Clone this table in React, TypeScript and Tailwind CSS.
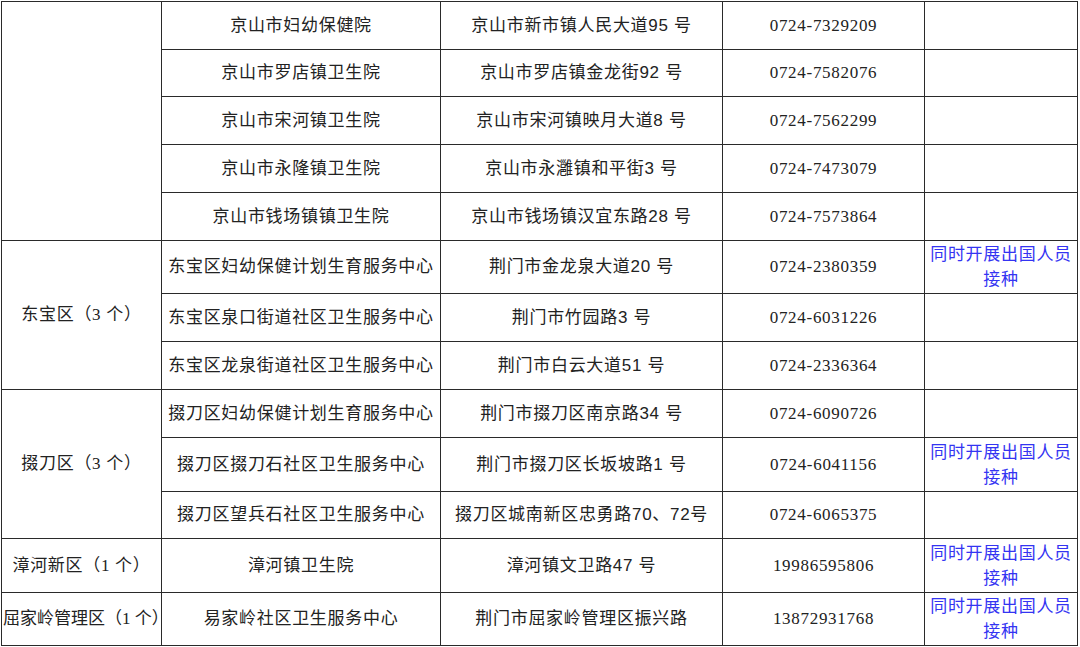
import React from "react";

const CJK = "font-['Liberation_Sans','Noto_Sans_CJK_SC',sans-serif]";
const SERIF = "font-['Liberation_Serif','Noto_Sans_CJK_SC',serif]";

type Row = {
  name: string;
  addr: string;
  phone: string;
  note?: boolean;
  h: string;
};

const rows: Row[] = [
  { name: "京山市妇幼保健院", addr: "京山市新市镇人民大道95 号", phone: "0724-7329209", h: "48px" },
  { name: "京山市罗店镇卫生院", addr: "京山市罗店镇金龙街92 号", phone: "0724-7582076", h: "47px" },
  { name: "京山市宋河镇卫生院", addr: "京山市宋河镇映月大道8 号", phone: "0724-7562299", h: "48px" },
  { name: "京山市永隆镇卫生院", addr: "京山市永灉镇和平街3 号", phone: "0724-7473079", h: "48px" },
  { name: "京山市钱场镇镇卫生院", addr: "京山市钱场镇汉宜东路28 号", phone: "0724-7573864", h: "48px" },
  { name: "东宝区妇幼保健计划生育服务中心", addr: "荆门市金龙泉大道20 号", phone: "0724-2380359", note: true, h: "53px" },
  { name: "东宝区泉口街道社区卫生服务中心", addr: "荆门市竹园路3 号", phone: "0724-6031226", h: "48px" },
  { name: "东宝区龙泉街道社区卫生服务中心", addr: "荆门市白云大道51 号", phone: "0724-2336364", h: "48px" },
  { name: "掇刀区妇幼保健计划生育服务中心", addr: "荆门市掇刀区南京路34 号", phone: "0724-6090726", h: "48px" },
  { name: "掇刀区掇刀石社区卫生服务中心", addr: "荆门市掇刀区长坂坡路1 号", phone: "0724-6041156", note: true, h: "54px" },
  { name: "掇刀区望兵石社区卫生服务中心", addr: "掇刀区城南新区忠勇路70、72号", phone: "0724-6065375", h: "47px" },
  { name: "漳河镇卫生院", addr: "漳河镇文卫路47 号", phone: "19986595806", note: true, h: "54px" },
  { name: "易家岭社区卫生服务中心", addr: "荆门市屈家岭管理区振兴路", phone: "13872931768", note: true, h: "53px" },
];

const groups: { label: string; span: number; tight?: boolean }[] = [
  { label: "", span: 5 },
  { label: "东宝区（3 个）", span: 3 },
  { label: "掇刀区（3 个）", span: 3 },
  { label: "漳河新区（1 个）", span: 1 },
  { label: "屈家岭管理区（1 个）", span: 1, tight: true },
];

const cell =
  "border-r border-b border-[#2a2a2a] flex items-center justify-center text-center whitespace-nowrap";

export default function App() {
  const cells: React.ReactNode[] = [];
  let r = 0;
  groups.forEach((g, gi) => {
    for (let k = 0; k < g.span; k++) {
      const row = rows[r];
      if (k === 0) {
        cells.push(
          <div
            key={`g${gi}`}
            className={`${cell} ${SERIF} ${g.tight ? "justify-start pl-[1px] tracking-[0px]" : ""}`}
            style={{ gridRow: `span ${g.span} / span ${g.span}` }}
          >
            {g.label}
          </div>
        );
      }
      cells.push(
        <div key={`n${r}`} className={`${cell} ${CJK}`}>
          {row.name}
        </div>
      );
      cells.push(
        <div key={`a${r}`} className={`${cell} ${CJK}`}>
          {row.addr}
        </div>
      );
      cells.push(
        <div key={`p${r}`} className={`${cell} ${SERIF}`}>
          {row.phone}
        </div>
      );
      cells.push(
        <div key={`x${r}`} className={`${cell} ${CJK} text-[#3434f2] leading-[25px]`}>
          {row.note ? (
            <span>
              同时开展出国人员
              <br />
              接种
            </span>
          ) : null}
        </div>
      );
      r++;
    }
  });

  return (
    <div className="w-[1080px] h-[647px] bg-white pl-px pt-px overflow-hidden">
      <div
        className="grid grid-cols-[160px_279px_282px_202px_153px] border-l border-t border-[#2a2a2a] w-max text-[17px] tracking-[0.7px] text-[#222]"
        style={{ gridTemplateRows: rows.map((x) => x.h).join(" ") }}
      >
        {cells}
      </div>
    </div>
  );
}
